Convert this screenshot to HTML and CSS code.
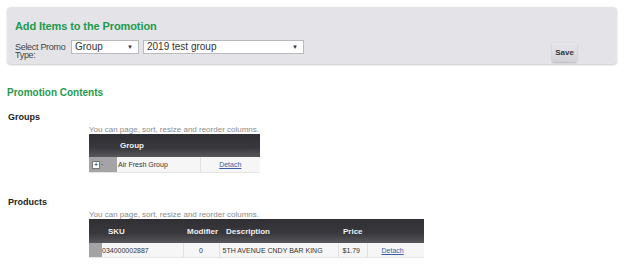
FILE: index.html
```html
<!DOCTYPE html>
<html lang="en">
<head>
  <meta charset="UTF-8">
  <title>Add Items to the Promotion</title>
  <link rel="stylesheet" href="styles.css">
</head>
<body>
  <div class="painel">
    <h2 class="titulo">Add Items to the Promotion</h2>
    <div class="linha">
      <label class="rotulo">Select Promo Type:</label>
      <div class="campo campo-tipo">Group<span class="seta">&#9660;</span></div>
      <div class="campo campo-grupo">2019 test group<span class="seta">&#9660;</span></div>
      <button class="salvar">Save</button>
    </div>
  </div>

  <h3 class="secao">Promotion Contents</h3>

  <h4 class="sub">Groups</h4>
  <div class="grade">
    <p class="dica">You can page, sort, resize and reorder columns.</p>
    <table class="tabela t-grupos">
      <colgroup>
        <col class="w-28"><col class="w-83"><col>
      </colgroup>
      <thead>
        <tr><th></th><th class="c-nome">Group</th><th></th></tr>
      </thead>
      <tbody>
        <tr>
          <td class="c-exp"><span class="mais">+</span><span class="menos">-</span></td>
          <td class="c-nome">Air Fresh Group</td>
          <td class="c-acao"><a href="#">Detach</a></td>
        </tr>
      </tbody>
    </table>
  </div>

  <h4 class="sub sub-prod">Products</h4>
  <div class="grade">
    <p class="dica">You can page, sort, resize and reorder columns.</p>
    <table class="tabela t-produtos">
      <colgroup>
        <col class="w-13"><col class="w-81"><col class="w-36"><col class="w-119"><col class="w-29"><col>
      </colgroup>
      <thead>
        <tr>
          <th></th>
          <th class="p-sku">SKU</th>
          <th class="p-mod">Modifier</th>
          <th class="p-desc">Description</th>
          <th class="p-preco">Price</th>
          <th></th>
        </tr>
      </thead>
      <tbody>
        <tr>
          <td class="p-exp"></td>
          <td class="p-sku">034000002887</td>
          <td class="p-mod">0</td>
          <td class="p-desc">5TH AVENUE CNDY BAR KING</td>
          <td class="p-preco">$1.79</td>
          <td class="p-acao"><a href="#">Detach</a></td>
        </tr>
      </tbody>
    </table>
  </div>
</body>
</html>
```

FILE: styles.css
```css
body {
  font-family: "Liberation Sans", Arial, sans-serif;
  margin: 0;
  background: #fff;
  color: #222;
}
.painel {
  margin: 7px 7px 0 7px;
  height: 57px;
  box-sizing: border-box;
  padding: 12px 8px 0 8px;
  background: #e3e3e8;
  border-radius: 4px;
  box-shadow: 0 1px 2px #c8c8cc;
}
.titulo {
  margin: 0;
  font-size: 11px;
  color: #1e9a4e;
  line-height: 14px;
  letter-spacing: -0.1px;
}
.linha {
  display: flex;
  align-items: flex-start;
  margin-top: 7px;
}
.rotulo {
  width: 56px;
  font-size: 9px;
  line-height: 8px;
  color: #444;
  margin-top: 3px;
  letter-spacing: -0.3px;
}
.campo {
  position: relative;
  height: 14px;
  box-sizing: border-box;
  background: #fff;
  border: 1px solid #b9b9be;
  font-size: 10px;
  line-height: 12px;
  padding-left: 3px;
  color: #333;
}
.campo-tipo {
  width: 68px;
}
.campo-grupo {
  width: 161px;
  margin-left: 4px;
}
.seta {
  position: absolute;
  right: 5px;
  top: 0;
  font-size: 6px;
  color: #333;
}
.salvar {
  margin-left: auto;
  margin-right: 32px;
  margin-top: 3px;
  width: 25px;
  height: 19px;
  padding: 0;
  border: none;
  border-radius: 2px;
  background: linear-gradient(#e8e8ec, #d2d2d6);
  box-shadow: 0 1px 2px #b5b5ba;
  font-family: inherit;
  font-size: 8px;
  font-weight: bold;
  color: #333;
}
.secao {
  margin: 23px 0 0 7px;
  font-size: 10px;
  line-height: 12px;
  color: #1e9a4e;
}
.sub {
  margin: 13px 0 0 8px;
  font-size: 9px;
  line-height: 11px;
  color: #222;
}
.sub-prod {
  margin-top: 24px;
}
.grade {
  margin-left: 89px;
}
.dica {
  margin: 2px 0 0 0;
  font-size: 8px;
  line-height: 9px;
  color: #8a8a8a;
}
.tabela {
  border-collapse: collapse;
  table-layout: fixed;
  font-size: 7px;
}
.tabela th {
  background: linear-gradient(#2f2f34, #38383d 60%, #57575c);
  color: #f0f0f0;
  font-size: 8px;
  font-weight: bold;
  text-align: left;
  padding: 0;
}
.tabela td {
  background: #f6f6f6;
  border-bottom: 1px solid #e6e6e6;
  padding: 0;
  color: #333;
}
.tabela a {
  color: #3a5fa8;
}
.w-13 { width: 13px; }
.w-28 { width: 28px; }
.w-29 { width: 29px; }
.w-36 { width: 36px; }
.w-81 { width: 81px; }
.w-83 { width: 83px; }
.w-119 { width: 119px; }
.t-grupos {
  width: 171px;
}
.t-grupos th {
  height: 23px;
}
.t-grupos td {
  height: 15px;
}
td.c-exp {
  background: #a4a4a6;
}
.mais {
  display: inline-block;
  width: 6px;
  height: 6px;
  margin-left: 3px;
  background: #fff;
  border: 1px solid #777;
  font-size: 7px;
  line-height: 5px;
  text-align: center;
  color: #111;
  vertical-align: middle;
}
.menos {
  margin-left: 1px;
  color: #444;
}
td.c-nome {
  padding-left: 1px;
}
th.c-nome {
  padding-left: 3px;
}
td.c-acao {
  border-left: 1px solid #e2e2e2;
  text-align: center;
}
.t-produtos {
  width: 335px;
}
.t-produtos th {
  height: 24px;
}
.t-produtos td {
  height: 14px;
}
td.p-exp {
  background: #a4a4a6;
}
th.p-sku {
  padding-left: 6px;
}
th.p-mod {
  padding-left: 4px;
}
td.p-mod {
  text-align: center;
  border-left: 1px solid #e2e2e2;
  border-right: 1px solid #e2e2e2;
}
th.p-desc {
  padding-left: 7px;
}
td.p-desc {
  padding-left: 3px;
}
th.p-preco {
  padding-left: 5px;
}
td.p-preco {
  padding-left: 4px;
  border-left: 1px solid #e2e2e2;
  border-right: 1px solid #e2e2e2;
}
td.p-acao {
  padding-left: 14px;
}
```
